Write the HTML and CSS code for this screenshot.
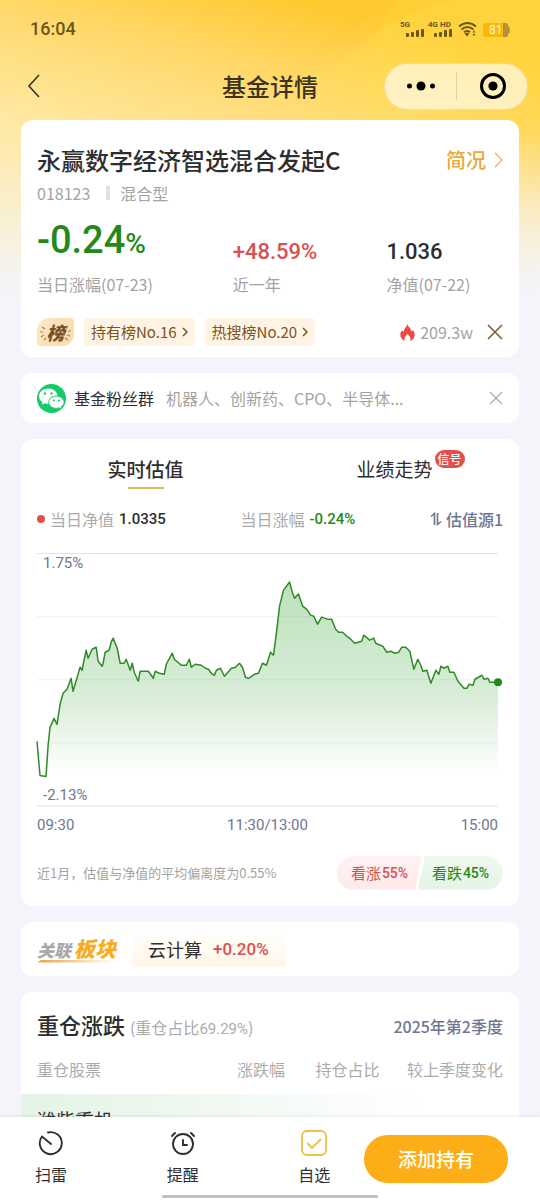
FILE: index.html
```html
<!DOCTYPE html>
<html lang="zh-CN">
<head>
    <meta charset="UTF-8">
    <meta name="viewport" content="width=device-width, initial-scale=1.0">
    <title>基金详情</title>
    <link rel="stylesheet" href="styles.css">
</head>
<body>
    <div class="app">
        <svg class="swoosh" viewBox="0 0 540 300" preserveAspectRatio="none" aria-hidden="true">
            <path d="M245 120C300 80 350 40 385 0H540V300H245Z" fill="#ffe27a" fill-opacity=".08"/>
            <path d="M306 120C330 60 370 25 450 0H540V300H306Z" fill="#ffe45c" fill-opacity=".22"/>
            <path d="M368 120C364 60 380 20 398 0H540V300H368Z" fill="#ffe94a" fill-opacity=".16"/>
        </svg>

        <header class="header">
            <div class="status-bar">
                <span class="time">16:04</span>
                <div class="status-icons">
                    <svg width="112" height="22" viewBox="0 0 112 22">
                        <g fill="#6b571b">
                            <g font-family="Roboto, sans-serif" font-size="8" font-weight="700">
                                <text x="0" y="9">5G</text>
                                <text x="28" y="9">4G HD</text>
                            </g>
                            <rect x="6" y="15" width="3" height="4" rx="1"/>
                            <rect x="11" y="14" width="3" height="5" rx="1"/>
                            <rect x="16" y="12" width="3" height="7" rx="1"/>
                            <rect x="21" y="11" width="3" height="8" rx="1"/>
                            <rect x="34" y="15" width="3" height="4" rx="1"/>
                            <rect x="39" y="14" width="3" height="5" rx="1"/>
                            <rect x="44" y="12" width="3" height="7" rx="1"/>
                            <rect x="49" y="11" width="3" height="8" rx="1"/>
                            <path d="M64.500 15.500L67 18.500L69.500 15.500Q67 14 64.500 15.500Z"/>
                            <path d="M72.500 14.500L74 12.500L75.500 14.500ZM72.500 16L74 18L75.500 16Z"/>
                        </g>
                        <g fill="none" stroke="#6b571b" stroke-width="2">
                            <path d="M59 8.500Q67.500 1.500 76 8.500"/>
                            <path d="M61.500 11.500Q67.500 6.500 73.500 11.500"/>
                            <path d="M64 14.200Q67 11.800 70 14"/>
                        </g>
                        <rect x="83" y="5" width="24" height="14" rx="3" fill="#fbb70c"/>
                        <path d="M103 5H106Q108 5 108 8Q110 9 110 12Q110 15 108 16Q108 19 106 19H103Z" fill="#b0923c"/>
                        <text x="89" y="16" font-family="Roboto, sans-serif" font-size="12" fill="#fff8d8">81</text>
                    </svg>
                </div>
            </div>

            <nav class="nav">
                <button class="icon-btn back" aria-label="返回">
                    <svg width="14" height="24" viewBox="0 0 14 24"><path d="M12 1L2 12L12 23" fill="none" stroke="#3a3420" stroke-width="1.600"/></svg>
                </button>
                <h1>基金详情</h1>
                <div class="capsule">
                    <button class="icon-btn" aria-label="更多">
                        <svg width="30" height="10" viewBox="0 0 30 10"><circle cx="3.500" cy="5" r="2.500"/><circle cx="15" cy="5" r="4.500"/><circle cx="26.500" cy="5" r="2.500"/></svg>
                    </button>
                    <button class="icon-btn" aria-label="关闭小程序">
                        <svg width="28" height="28" viewBox="0 0 28 28"><circle cx="14" cy="14" r="11.500" fill="none" stroke="#000" stroke-width="3"/><circle cx="14" cy="14" r="4.600"/></svg>
                    </button>
                </div>
            </nav>
        </header>

        <main class="content">
            <section class="card fund">
                <div class="row">
                    <h2>永赢数字经济智选混合发起C</h2>
                    <a class="brief" href="#brief">简况
                        <svg width="9" height="16" viewBox="0 0 9 16"><path d="M1 1L8 8L1 15" fill="none" stroke="#ecb552" stroke-width="1.400"/></svg>
                    </a>
                </div>
                <p class="fund-meta"><span>018123</span><i></i><span>混合型</span></p>

                <dl class="stats">
                    <div><dd class="num big green">-0.24<small>%</small></dd><dt>当日涨幅(07-23)</dt></div>
                    <div><dd class="num red">+48.59%</dd><dt>近一年</dt></div>
                    <div><dd class="num">1.036</dd><dt>净值(07-22)</dt></div>
                </dl>

                <div class="ranks">
                    <span class="rank-badge">
                        <svg width="37" height="28" viewBox="0 0 37 28" fill="none" stroke="#ad8149" stroke-width="1.200">
                            <path d="M5 9L8 11M3 14H6M4 19L7 17M7 22L9 20M31 8L29 10M34 13H31M33 18L30 17M31 22L28 20"/>
                        </svg>
                        <b>榜</b>
                    </span>
                    <a class="chip" href="#hold">持有榜No.16
                        <svg width="6" height="10" viewBox="0 0 6 10"><path d="M1 1L5 5L1 9" fill="none" stroke="#7a5423" stroke-width="1.500"/></svg>
                    </a>
                    <a class="chip" href="#hot">热搜榜No.20
                        <svg width="6" height="10" viewBox="0 0 6 10"><path d="M1 1L5 5L1 9" fill="none" stroke="#7a5423" stroke-width="1.500"/></svg>
                    </a>
                    <span class="heat">
                        <svg width="15" height="17" viewBox="0 0 15 17"><path d="M7.500 0C8 3 12 5 11.500 8L13 6C16 10 15 15 10 17C11.500 14 9.500 12 7.500 10C5.500 12 3.500 14 5 17C0 15 -1 10 2 6.500L4 8C3.500 4 7 3 7.500 0Z" fill="#ea4b49"/></svg>
                        209.3w
                    </span>
                    <button class="icon-btn" aria-label="收起榜单">
                        <svg width="16" height="16" viewBox="0 0 16 16"><path d="M1 1L15 15M15 1L1 15" stroke="#7a5a2c" stroke-width="1.500"/></svg>
                    </button>
                </div>
            </section>

            <section class="card group">
                <svg width="29" height="29" viewBox="0 0 29 29">
                    <circle cx="14.500" cy="14.500" r="14.500" fill="#14cb68"/>
                    <path d="M11.500 4.500C6 4.500 2 8 2 12.200C2 14.800 3.300 16.800 5.500 18.200L4.800 20.800L7.800 19.300C9 19.700 10.300 19.800 11.600 19.800C10.800 15 14.300 11.500 20.500 11.500C19.800 7.500 16.300 4.500 11.500 4.500Z" fill="#fff"/>
                    <path d="M19.300 12.300C14.800 12.300 11.800 15 11.800 18.200C11.800 21.700 15 24.200 19.300 24.200Q20.800 24.200 22.200 23.700L24.700 25L24 22.700C26 21.500 27 20 27 18.200C27 15 23.800 12.300 19.300 12.300Z" fill="#fff" stroke="#14cb68" stroke-width=".7"/>
                    <g fill="#14cb68"><circle cx="8" cy="9.500" r="1.200"/><circle cx="14.500" cy="9.500" r="1.200"/><circle cx="17" cy="16.500" r="1"/><circle cx="22" cy="16.500" r="1"/></g>
                </svg>
                <strong>基金粉丝群</strong>
                <p>机器人、创新药、CPO、半导体...</p>
                <button class="icon-btn" aria-label="关闭">
                    <svg width="14" height="14" viewBox="0 0 14 14"><path d="M1 1L13 13M13 1L1 13" stroke="#aaa" stroke-width="1.200"/></svg>
                </button>
            </section>

            <section class="card estimate">
                <div class="tabs" role="tablist">
                    <button class="tab active" role="tab" aria-selected="true">实时估值</button>
                    <button class="tab" role="tab" aria-selected="false"><span>业绩走势<em>信号</em></span></button>
                </div>

                <div class="legend">
                    <span class="legend-item dot">当日净值 <b class="num">1.0335</b></span>
                    <span class="legend-item">当日涨幅 <b class="num green">-0.24%</b></span>
                    <button class="source">
                        <svg width="12" height="14" viewBox="0 0 12 14"><path d="M1 4.500L4.500 1.500V13M7.500 1V12.500L11 9.500" fill="none" stroke="#6f7591" stroke-width="1.600"/></svg>
                        估值源1
                    </button>
                </div>

                <div class="chart">
                    <span class="axis-max">1.75%</span>
                    <svg viewBox="0 0 460 252">
                        <defs>
                            <linearGradient id="fade" gradientUnits="userSpaceOnUse" x1="0" y1="29" x2="0" y2="220">
                                <stop offset="0" stop-color="#3fa63a" stop-opacity=".34"/>
                                <stop offset=".6" stop-color="#3fa63a" stop-opacity=".2"/>
                                <stop offset="1" stop-color="#3fa63a" stop-opacity="0"/>
                            </linearGradient>
                        </defs>
                        <path class="grid" d="M0 63.500H460M0 126.500H460M0 189.500H460"/>
                        <path class="edge" d="M0 .5H460M0 252.500H460"/>
                        <path id="area" fill="url(#fade)"/>
                        <polyline id="line" points="0,188 3,222 9,223 11,193 13,174 17,165 20,171 23,151 26,140 30,136 34,125 36,138 43,114 45,117 49,97 51,105 55,96 59,94 61,108 65,113 66,110 68,99 72,97 74,89 76,85 80,95 83,110 87,110 89,106 93,117 95,110 97,119 101,128 103,118 111,118 114,122 116,125 118,118 122,120 127,121 129,111 135,100 137,106 144,112 149,112 152,106 154,114 158,111 164,112 168,115 171,116 174,120 177,122 179,117 183,115 187,123 194,115 198,114 202,110 205,114 208,124 211,125 217,121 221,120 225,110 229,112 233,99 236,102 239,79 242,53 246,37 252,29 255,40 257,45 261,41 265,53 269,56 273,62 276,63 280,71 284,64 290,66 294,66 298,76 301,79 305,79 309,83 313,86 317,90 324,88 326,82 332,87 336,85 338,90 345,93 349,99 353,98 357,100 361,99 364,94 368,94 372,98 376,116 380,106 383,112 385,118 389,117 393,130 398,117 401,121 403,113 406,115 410,113 412,119 416,119 420,128 426,135 429,135 431,131 435,132 437,126 444,122 446,126 450,125 452,129 460,129"/>
                        <circle cx="460" cy="129" r="4" fill="#24891a"/>
                    </svg>
                    <span class="axis-min">-2.13%</span>
                </div>
                <div class="times"><span>09:30</span><span>11:30/13:00</span><span>15:00</span></div>

                <div class="row vote-row">
                    <p>近1月，估值与净值的平均偏离度为0.55%</p>
                    <div class="votes">
                        <button class="vote up">看涨<b class="num">55%</b></button>
                        <button class="vote down">看跌<b class="num">45%</b></button>
                    </div>
                </div>
            </section>

            <section class="card sector">
                <h3><span>关联</span><b>板块</b></h3>
                <a href="#cloud">云计算 <b class="num red">+0.20%</b></a>
            </section>

            <section class="card holdings">
                <div class="row">
                    <h2>重仓涨跌 <small>(重仓占比<span class="num">69.29%</span>)</small></h2>
                    <span class="quarter">2025年第2季度</span>
                </div>
                <table>
                    <thead>
                        <tr><th>重仓股票</th><th>涨跌幅</th><th>持仓占比</th><th>较上季度变化</th></tr>
                    </thead>
                    <tbody>
                        <tr><td colspan="4">潍柴重机</td></tr>
                    </tbody>
                </table>
            </section>
        </main>

        <footer class="toolbar">
            <button class="tool">
                <svg width="26" height="26" viewBox="0 0 26 26" fill="none" stroke="#2e2e2e" stroke-width="1.900" stroke-linecap="round"><path d="M10 2.500A11 11 0 1 1 4 6.500L13 14"/></svg>
                扫雷
            </button>
            <button class="tool">
                <svg width="26" height="26" viewBox="0 0 26 26" fill="none" stroke="#2e2e2e" stroke-width="1.900" stroke-linecap="round"><circle cx="13" cy="14" r="10"/><path d="M13 10V15H17M2 6L5 3M24 6L21 3"/></svg>
                提醒
            </button>
            <button class="tool">
                <svg width="26" height="26" viewBox="0 0 26 26" fill="none" stroke="#efc044" stroke-width="1.800"><rect x="1" y="1" width="24" height="24" rx="5"/><path d="M6 13L11 18L20 9"/></svg>
                自选
            </button>
            <button class="add">添加持有</button>
            <i class="home-bar"></i>
        </footer>
    </div>

    <script>
        // Close the price line down to the baseline to get the filled area
        const points = document.getElementById('line').getAttribute('points');
        document.getElementById('area').setAttribute('d', `M0 222L${points.split(' ').join('L')}L460 222Z`);
    </script>
</body>
</html>
```
FILE: styles.css
```css
* {
    margin: 0;
    padding: 0;
    box-sizing: border-box;
}

body {
    font-family: "Noto Sans CJK SC", sans-serif;
    font-size: 16px;
    line-height: 24px;
    color: #2e2e2e;
    background: #f4f5fb;
}

button {
    font: inherit;
    color: inherit;
    background: none;
    border: none;
    cursor: pointer;
}

a {
    color: inherit;
    text-decoration: none;
}

h1, h2, h3 {
    font-weight: 500;
}

svg {
    display: block;
    flex-shrink: 0;
}

.app {
    position: relative;
    height: 100vh;
    display: flex;
    flex-direction: column;
    overflow: hidden;
    background:
        linear-gradient(rgba(244, 245, 251, 0) 130px, #f4f5fb 295px),
        linear-gradient(195deg, #ffc82e 60px, #ffd868 140px, #ffe9a6 256px);
}

.swoosh {
    position: absolute;
    top: 0;
    left: 0;
    width: 100%;
    height: 300px;
    -webkit-mask-image: linear-gradient(#000 80px, transparent 200px);
    mask-image: linear-gradient(#000 80px, transparent 200px);
}

.header, .content, .toolbar {
    position: relative;
}

.num {
    font-family: Roboto, sans-serif;
    font-weight: 500;
}

.green {
    color: #24891a;
}

.red {
    color: #d9504e;
}

.icon-btn {
    display: flex;
    align-items: center;
    justify-content: center;
}

.row {
    display: flex;
    align-items: center;
    justify-content: space-between;
}

/* Header */
.status-bar {
    display: flex;
    align-items: center;
    justify-content: space-between;
    height: 58px;
    padding: 0 28px 0 30px;
}

.time {
    font-family: Roboto, sans-serif;
    font-size: 18px;
    font-weight: 500;
    color: #6b571b;
}

.nav {
    display: grid;
    grid-template-columns: 1fr auto 1fr;
    align-items: center;
    height: 62px;
    padding: 0 12px 6px;
}

.back {
    width: 16px;
    height: 32px;
    margin-left: 14px;
}

.nav h1 {
    font-size: 24px;
    line-height: 32px;
    color: #3a3420;
}

.capsule {
    display: flex;
    justify-self: end;
    width: 144px;
    height: 47px;
    border: 1px solid rgba(200, 160, 60, .25);
    border-radius: 24px;
    background: rgba(255, 250, 230, .72);
}

.capsule .icon-btn {
    flex: 1;
}

.capsule .icon-btn + .icon-btn {
    justify-content: flex-start;
}

.capsule .icon-btn + .icon-btn::before {
    content: "";
    width: 1px;
    height: 28px;
    background: #e2d3a4;
    margin-right: 22px;
}

/* Cards */
.content {
    flex: 1;
    min-height: 0;
    display: flex;
    flex-direction: column;
    gap: 16px;
    padding: 0 21px;
    overflow-y: auto;
    scrollbar-width: none;
}

.card {
    flex-shrink: 0;
    padding: 0 16px;
    border-radius: 12px;
    background: #fff;
}

.fund {
    padding: 24px 16px 11px;
}

.fund h2 {
    font-size: 24px;
    line-height: 32px;
}

.brief {
    display: flex;
    align-items: center;
    gap: 8px;
    font-size: 20px;
    font-weight: 500;
    color: #e9a83a;
}

.fund-meta {
    display: flex;
    align-items: center;
    margin-top: 5px;
    color: #a3a3a3;
}

.fund-meta i {
    width: 4px;
    height: 14px;
    margin: 0 10px 0 16px;
    background: #e2e2e2;
}

.stats {
    display: grid;
    grid-template-columns: 42% 33% 1fr;
    align-items: end;
    margin-top: 11px;
}

.stats dd {
    margin-bottom: 4px;
    font-size: 22px;
    line-height: 32px;
}

.stats dd.big {
    font-size: 38px;
    line-height: 48px;
}

.big small {
    font-size: 28px;
}

.stats dt {
    color: #a3a3a3;
    white-space: nowrap;
}

.ranks {
    display: flex;
    align-items: center;
    gap: 10px;
    margin-top: 22px;
}

.rank-badge {
    position: relative;
    border-radius: 12px 4px 12px 4px;
    background: linear-gradient(120deg, #fde8c8, #fbd9a5);
}

.rank-badge b {
    position: absolute;
    inset: 0;
    font-size: 18px;
    font-weight: 900;
    font-style: italic;
    line-height: 28px;
    text-align: center;
    color: #73502c;
}

.chip {
    display: flex;
    align-items: center;
    gap: 5px;
    height: 28px;
    padding: 0 7px;
    border-radius: 4px;
    font-size: 15px;
    white-space: nowrap;
    color: #7a5423;
    background: #fff3e4;
}

.heat {
    display: flex;
    align-items: center;
    gap: 5px;
    margin-left: auto;
    margin-right: 4px;
    color: #a3a3a3;
}

.group {
    display: flex;
    align-items: center;
    height: 50px;
}

.group strong {
    margin: 0 12px 0 8px;
    font-weight: 400;
}

.group p {
    flex: 1;
    color: #a3a3a3;
}

/* Estimate chart */
.estimate {
    padding-bottom: 16px;
}

.tabs {
    display: grid;
    grid-template-columns: 1fr 1fr;
    padding: 16px 0 0;
}

.tab {
    font-size: 19px;
    line-height: 28px;
}

.tab.active {
    font-weight: 500;
    padding-right: 16px;
}

.tab.active::after {
    content: "";
    display: block;
    width: 36px;
    height: 2px;
    margin: 4px auto 0;
    border-radius: 1px;
    background: #dfbb55;
}

.tab:not(.active) {
    padding: 0 0 6px 16px;
}

.tab span {
    position: relative;
}

.tab em {
    position: absolute;
    left: 100%;
    top: -5px;
    width: 30px;
    margin-left: 2px;
    border-radius: 9px;
    font-size: 12px;
    font-style: normal;
    font-weight: 500;
    line-height: 18px;
    text-align: center;
    color: #fff;
    background: #e54d4b;
}

.legend {
    display: flex;
    align-items: center;
    justify-content: space-between;
    margin-top: 18px;
    color: #ababab;
}

.legend-item {
    display: flex;
    align-items: center;
    gap: 5px;
}

.legend-item .num {
    font-size: 15px;
    color: #2e2e2e;
}

.legend-item .green {
    color: #24891a;
}

.dot::before {
    content: "";
    width: 8px;
    height: 8px;
    border-radius: 50%;
    background: #e54d4b;
}

.source {
    display: flex;
    align-items: center;
    gap: 4px;
    font-weight: 500;
    color: #6f7591;
}

.chart {
    position: relative;
    margin: 22px 5px 0 0;
}

.chart svg {
    width: 100%;
    overflow: visible;
}

.axis-max, .axis-min {
    position: absolute;
    left: 6px;
    font-family: Roboto, sans-serif;
    font-size: 15px;
    line-height: 20px;
    color: #6f7591;
}

.axis-max {
    top: 0;
}

.axis-min {
    bottom: 1px;
}

.grid {
    stroke: #f0f1f3;
}

.edge {
    stroke: #dfe3e3;
}

#line {
    fill: none;
    stroke: #2f8a28;
    stroke-width: 1.5;
    stroke-linejoin: round;
}

.times {
    display: flex;
    justify-content: space-between;
    margin: 7px 5px 0 0;
    font-family: Roboto, sans-serif;
    font-size: 15px;
    color: #6f7591;
}

.vote-row {
    margin-top: 19px;
}

.vote-row p {
    font-size: 13px;
    color: #a3a3a3;
    white-space: nowrap;
}

.votes {
    display: flex;
}

.vote {
    display: flex;
    align-items: center;
    justify-content: center;
    gap: 1px;
    width: 85px;
    height: 34px;
    font-size: 15px;
}

.vote .num {
    font-size: 14px;
}

.up {
    border-radius: 17px 3px 3px 17px;
    clip-path: polygon(0 0, 100% 0, 92% 100%, 0 100%);
    color: #d9504e;
    background: linear-gradient(#fff2f2, #fdeaea);
}

.down {
    margin-left: -4px;
    border-radius: 3px 17px 17px 3px;
    clip-path: polygon(8% 0, 100% 0, 100% 100%, 0 100%);
    color: #24891a;
    background: linear-gradient(#f0f9f0, #e5f3e5);
}

/* Sector */
.sector {
    display: flex;
    align-items: center;
    gap: 16px;
    height: 54px;
}

.sector h3 {
    position: relative;
    display: flex;
    align-items: baseline;
    gap: 3px;
    font-style: italic;
    font-weight: 900;
    line-height: 26px;
}

.sector h3::after {
    content: "";
    position: absolute;
    left: 0;
    bottom: 0;
    width: 100%;
    height: 3px;
    background: linear-gradient(90deg, #e8a63a, #fff);
    clip-path: polygon(5px 0, 100% 0, 100% 100%, 0 100%);
}

.sector h3 span {
    font-size: 17px;
    color: #a8a8a8;
}

.sector h3 b {
    font-size: 21px;
    font-weight: 900;
    color: #f8ac26;
}

.sector a {
    display: flex;
    align-items: center;
    gap: 11px;
    height: 36px;
    padding: 0 16px;
    border-radius: 4px;
    font-size: 18px;
    background: linear-gradient(#fff, #fff5e6);
}

.sector .num {
    font-size: 17px;
}

/* Holdings */
.holdings {
    padding-top: 16px;
    overflow: hidden;
}

.holdings h2 {
    font-size: 22px;
    line-height: 32px;
}

.holdings small {
    font-size: 16px;
    font-weight: 400;
    color: #ababab;
}

.holdings small .num {
    font-size: 15px;
    font-weight: 400;
}

.quarter {
    font-weight: 500;
    color: #6f7591;
}

.holdings table {
    width: calc(100% + 32px);
    margin: 12px -16px 0;
    border-collapse: collapse;
    table-layout: fixed;
}

.holdings th {
    width: 20%;
    padding: 0 0 13px;
    font-weight: 400;
    text-align: right;
    white-space: nowrap;
    color: #ababab;
}

.holdings th:first-child {
    width: 33%;
}

.holdings th:nth-child(3) {
    width: 19%;
}

.holdings th:last-child {
    width: 28%;
    padding-right: 16px;
}

.holdings th:first-child, .holdings td {
    padding-left: 16px;
    text-align: left;
}

.holdings td {
    height: 64px;
    padding-top: 12px;
    font-size: 19px;
    line-height: 28px;
    vertical-align: top;
    background: linear-gradient(90deg, #e4f3e6, #fff 80%);
}

/* Bottom toolbar */
.toolbar {
    display: flex;
    align-items: flex-start;
    justify-content: space-between;
    height: 83px;
    padding: 13px 32px 0 35px;
    background: #fff;
    box-shadow: 0 -1px 3px rgba(0, 0, 0, .08);
}

.tool {
    display: flex;
    flex-direction: column;
    align-items: center;
    gap: 6px;
}

.add {
    width: 144px;
    height: 48px;
    margin: 5px 0 0 -66px;
    border-radius: 24px;
    font-size: 19px;
    font-weight: 500;
    color: #fff;
    background: #fdae17;
}

.home-bar {
    position: absolute;
    left: 30%;
    right: 30%;
    bottom: 2px;
    height: 3px;
    border-radius: 2px;
    background: #bfbfbf;
}
```
